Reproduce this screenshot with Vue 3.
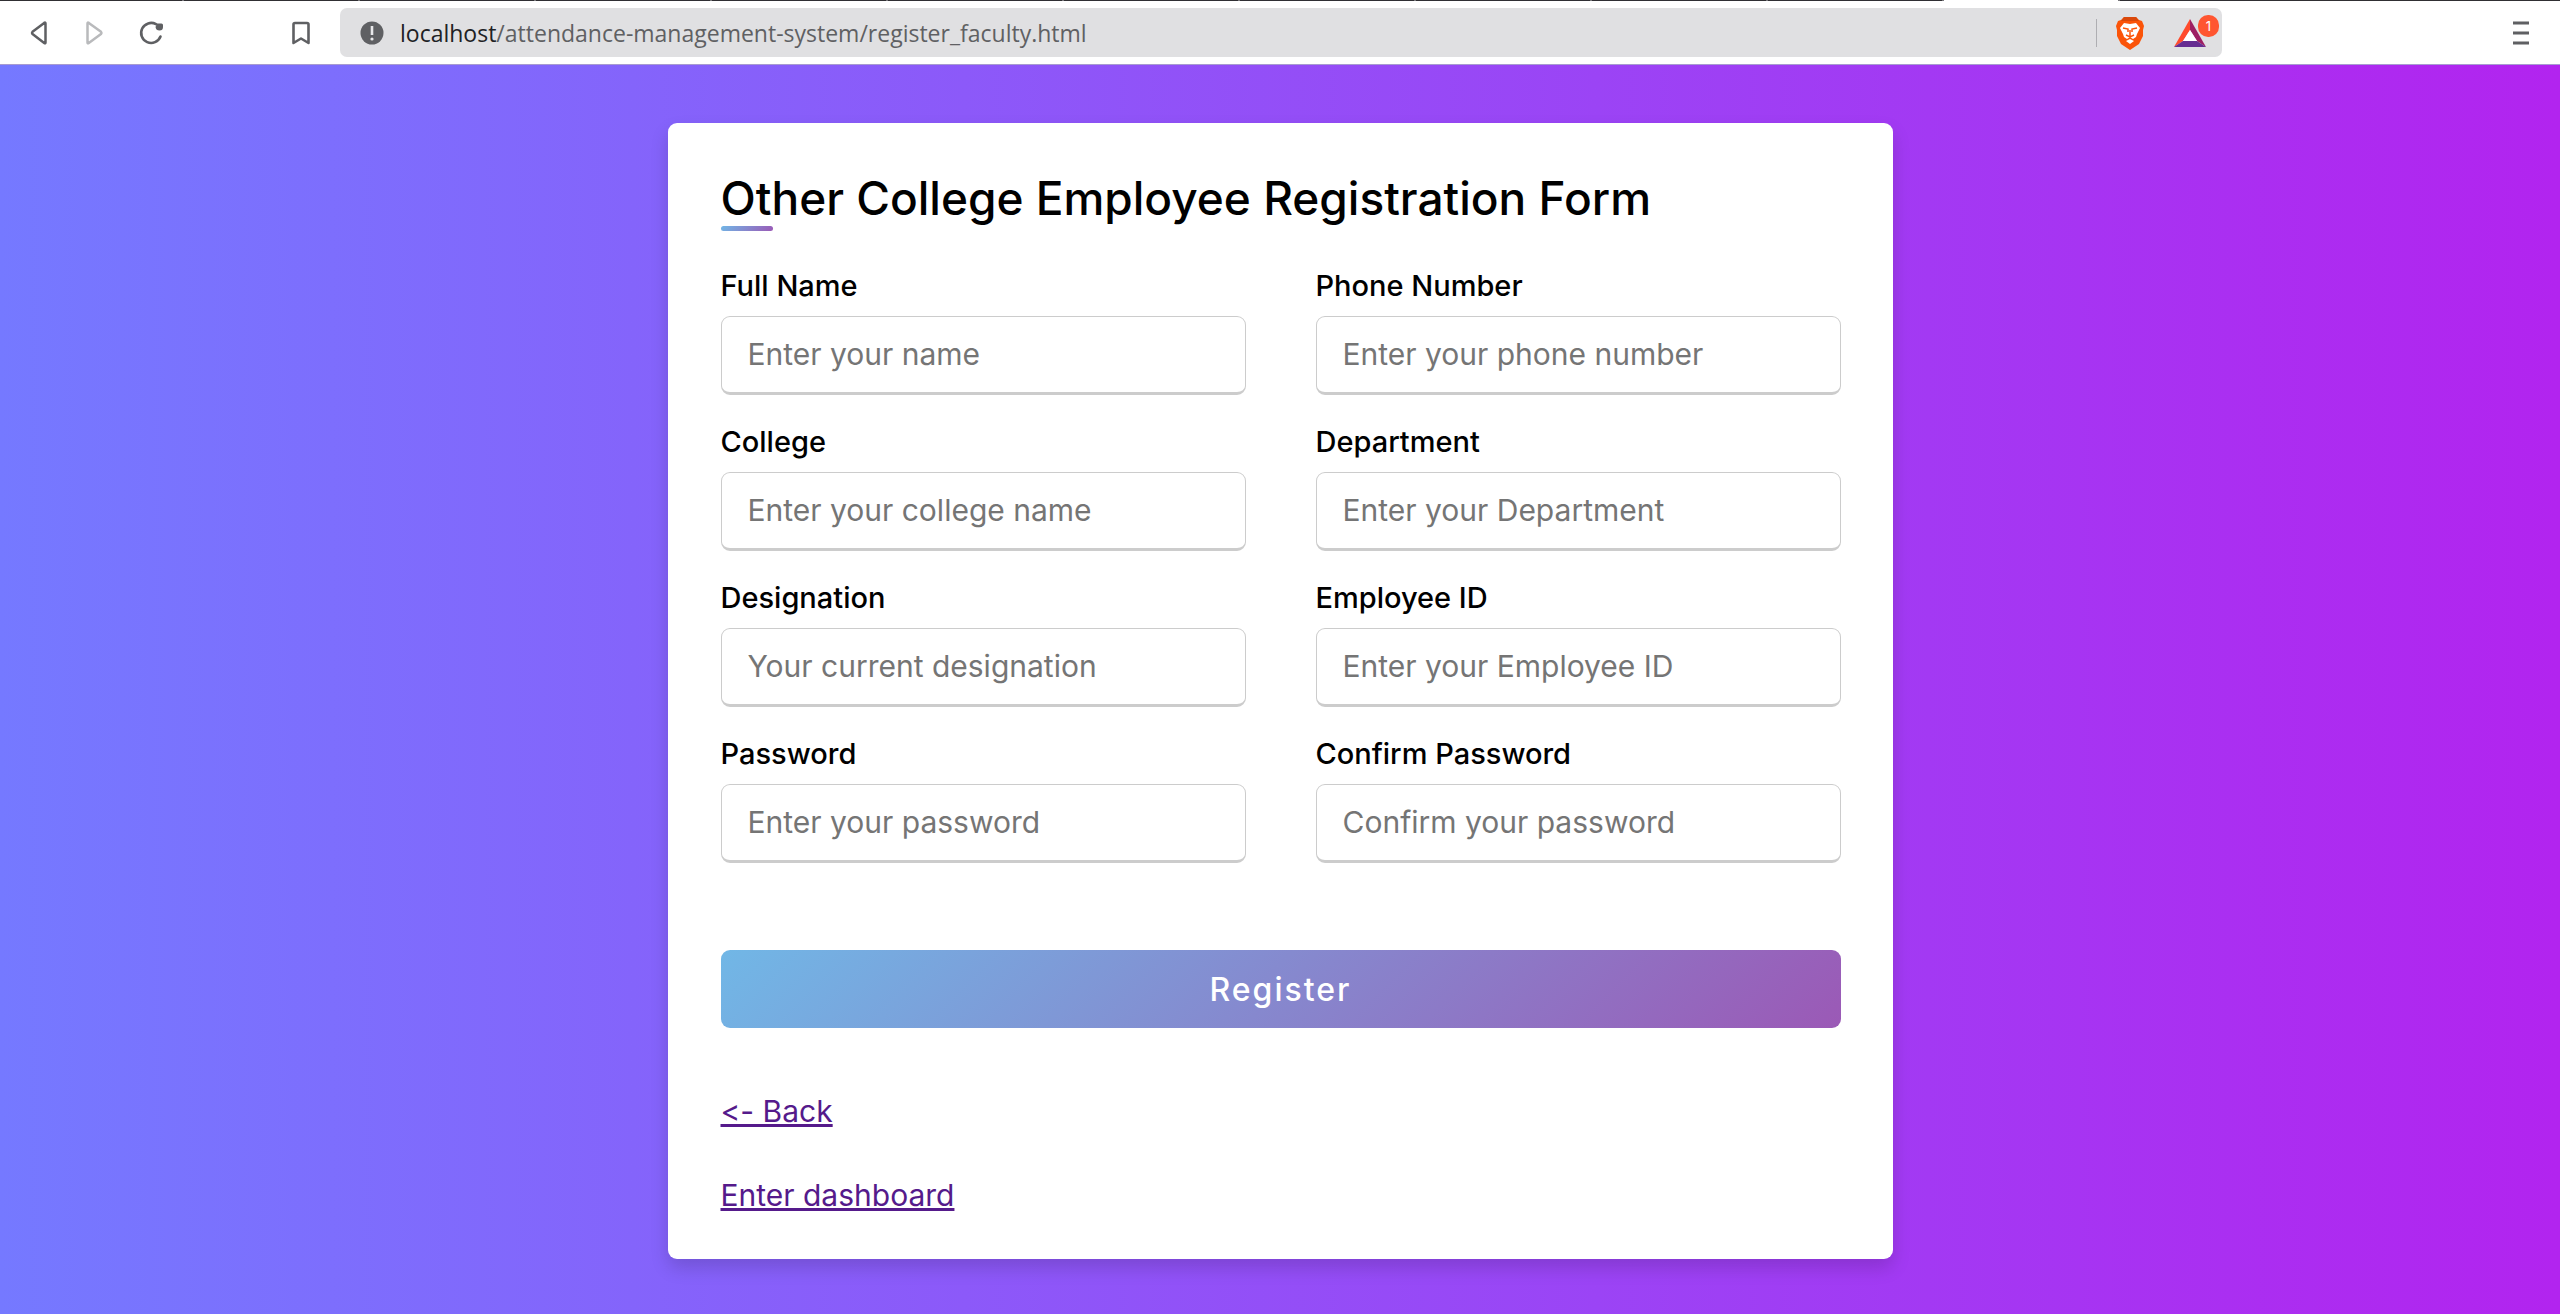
<script setup>
import { reactive } from 'vue'

const fields = [
  { id: 'name', label: 'Full Name', placeholder: 'Enter your name', type: 'text' },
  { id: 'phone', label: 'Phone Number', placeholder: 'Enter your phone number', type: 'text' },
  { id: 'college', label: 'College', placeholder: 'Enter your college name', type: 'text' },
  { id: 'department', label: 'Department', placeholder: 'Enter your Department', type: 'text' },
  { id: 'designation', label: 'Designation', placeholder: 'Your current designation', type: 'text' },
  { id: 'employee-id', label: 'Employee ID', placeholder: 'Enter your Employee ID', type: 'text' },
  { id: 'password', label: 'Password', placeholder: 'Enter your password', type: 'password' },
  { id: 'confirm', label: 'Confirm Password', placeholder: 'Confirm your password', type: 'password' },
]
const form = reactive({})
</script>

<template>
  <div class="window">
    <div class="tab-strip">
      <span v-for="n in 12" :key="n" class="tab" :class="{ active: n === 12 }"></span>
    </div>
    <header class="toolbar">
      <nav class="nav">
        <button type="button" aria-label="Back">
          <svg width="24" height="28" viewBox="0 0 24 28" fill="none" stroke="#5f6063" stroke-width="2.5" stroke-linejoin="round"><path d="M18.500 4.500q0-1.500-1.300-.6L5.500 12.800q-1 1.200 0 2.300L17.200 24q1.300.9 1.300-.6z" /></svg>
        </button>
        <button type="button" aria-label="Forward">
          <svg width="24" height="28" viewBox="0 0 24 28" fill="none" stroke="#b9babc" stroke-width="2.5" stroke-linejoin="round"><path d="M5.500 4.500q0-1.500 1.300-.6l12.200 8.900q1 1.200 0 2.300L6.800 24q-1.300.9-1.300-.6z" /></svg>
        </button>
        <button type="button" aria-label="Reload">
          <svg width="28" height="28" viewBox="0 0 28 28" fill="none" stroke="#5f6063" stroke-width="2.600" stroke-linecap="round"><path d="M19 5.200A10 10 0 1 0 23.500 17.500" /><path d="M20 4.500h4.500a1.500 1.500 0 0 1 1.500 1.500v2q0 3.500-3.500 3.500t-4-3.500z" fill="#5f6063" stroke="none" /></svg>
        </button>
      </nav>
      <button type="button" class="bookmark" aria-label="Bookmark">
        <svg width="20" height="28" viewBox="0 0 20 28" fill="none" stroke="#5f6063" stroke-width="2.600" stroke-linejoin="round"><path d="M2.500 5.500q0-1.500 1.500-1.500h12q1.500 0 1.500 1.500v18.500L10 19.500l-7.500 4.500z" /></svg>
      </button>
      <div class="address">
        <svg class="info" width="24" height="24" viewBox="0 0 24 24"><circle cx="12" cy="12" r="11.500" fill="#5f6063" /><path d="M12 5v9" stroke="#e8e8ea" stroke-width="2.600" /><circle cx="12" cy="18" r="1.600" fill="#e8e8ea" /></svg>
        <p class="url"><span class="host">localhost</span>/attendance-management-system/register_faculty.html</p>
        <span class="divider"></span>
        <svg class="lion" width="30" height="34" viewBox="0 0 30 34">
          <path d="M9 1h12l3 3 3 1 2 5-1 4 0 6-4 8-9 6-9-6-4-8 0-6-1-4 2-5 3-1z" fill="#fb5409" />
          <path d="M9 1h12l3 4H6z" fill="#d9480b" />
          <path d="M9 7l6 1 6-1 4 5-3 6-1 3-3 2-3-2-3 2-3-2-1-3-3-6z" fill="#fff" />
          <path d="M8 12l5 1v3M22 12l-5 1v3M15 14v6M11 19l4 2 4-2" fill="none" stroke="#fb5409" stroke-width="1.500" />
          <path d="M15 23l4 2-4 3-4-3z" fill="#fff" />
        </svg>
        <span class="rewards">
          <svg width="32" height="28" viewBox="0 0 32 28">
            <path d="M16 0L0 28l9-6 7-11z" fill="#ff4a2c" />
            <path d="M16 0l16 28-9-6-7-11z" fill="#9e1f63" />
            <path d="M0 28h32l-9-6H9z" fill="#662d91" />
            <path d="M16 11l7 11H9z" fill="#fff" />
          </svg>
          <span class="count">1</span>
        </span>
      </div>
      <button type="button" class="menu" aria-label="Menu">
        <svg width="16" height="28" viewBox="0 0 16 28" stroke="#5f6063" stroke-width="3"><path d="M0 4h16M0 14h16M0 24h16" /></svg>
      </button>
    </header>

    <main class="page">
      <section class="card">
        <h1>Other College Employee Registration Form</h1>
        <form @submit.prevent>
          <div class="fields">
            <div v-for="f in fields" :key="f.id" class="field">
              <label :for="f.id">{{ f.label }}</label>
              <input :id="f.id" v-model="form[f.id]" :type="f.type" :placeholder="f.placeholder" />
            </div>
          </div>
          <button class="submit" type="submit">Register</button>
        </form>
        <div class="links">
          <a href="#back">&lt;- Back</a>
          <a href="#dashboard">Enter dashboard</a>
        </div>
      </section>
    </main>
  </div>
</template>

<style>
body {
  margin: 0;
}
</style>

<style scoped>
* {
  box-sizing: border-box;
}
.window {
  display: flex;
  flex-direction: column;
  min-height: 100vh;
  font-family: Inter, "Noto Sans", sans-serif;
}
.tab-strip {
  display: flex;
  height: 1px;
  padding-left: 8px;
  background: #302f33;
  overflow: hidden;
}
.tab {
  flex: 0 0 176px;
  border-right: 2px solid #77767a;
}
.tab.active {
  background: #fff;
}
.toolbar {
  display: flex;
  align-items: center;
  height: 64px;
  padding: 0 31px 0 27px;
  background: #fff;
  border-bottom: 1px solid #a79bd0;
}
.toolbar button {
  display: flex;
  padding: 0;
  border: 0;
  background: none;
}
.nav {
  display: flex;
  gap: 31px;
}
.bookmark {
  margin-left: 126px;
}
.address {
  display: flex;
  align-items: center;
  flex: 0 1 1882px;
  height: 49px;
  margin-left: 29px;
  padding: 0 3px 0 20px;
  border-radius: 7px;
  background: #e0e0e2;
}
.url {
  flex: 1;
  margin: 0 0 0 16px;
  font: 23px/32px "Open Sans", "Noto Sans", sans-serif;
  color: #5f6063;
}
.host {
  color: #202124;
}
.divider {
  width: 1px;
  height: 28px;
  background: #aeaeb2;
}
.lion {
  margin-left: 18px;
}
.rewards {
  display: flex;
  position: relative;
  margin-left: 29px;
  padding-right: 13px;
}
.count {
  position: absolute;
  top: -4px;
  right: 0;
  width: 21px;
  height: 22px;
  border-radius: 10px;
  background: #ff5530;
  color: #fff;
  font-size: 13px;
  line-height: 22px;
  text-align: center;
}
.menu {
  margin-left: auto;
}
.page {
  flex: 1;
  display: flex;
  justify-content: center;
  align-items: flex-start;
  padding: 58px 20px 54px;
  background: linear-gradient(to right, #7579ff, #b224ef);
}
.card {
  width: 100%;
  max-width: 1225px;
  padding: 43px 52px 43px 53px;
  border-radius: 9px;
  background: #fff;
  box-shadow: 0 9px 18px rgba(0, 0, 0, 0.15);
}
h1 {
  position: relative;
  margin: 0;
  font-size: 46px;
  font-weight: 500;
  line-height: 65px;
  color: #000;
}
h1::after {
  content: "";
  position: absolute;
  left: 0;
  bottom: 0;
  width: 52px;
  height: 5px;
  border-radius: 3px;
  background: linear-gradient(135deg, #71b7e6, #9b59b6);
}
.fields {
  display: grid;
  grid-template-columns: 1fr 1fr;
  column-gap: 70px;
  row-gap: 26px;
  margin-top: 34px;
}
label {
  display: block;
  margin-bottom: 9px;
  font-size: 29px;
  font-weight: 500;
  line-height: 42px;
}
input {
  display: block;
  width: 100%;
  height: 79px;
  padding: 0 26px 2px;
  border: 1px solid #ccc;
  border-bottom-width: 3px;
  border-radius: 9px;
  outline: none;
  background: #fff;
  font: 30px Inter, "Noto Sans", sans-serif;
}
input::placeholder {
  color: #757575;
}
.submit {
  display: block;
  width: 100%;
  height: 78px;
  margin-top: 87px;
  padding: 0;
  border: 0;
  border-radius: 9px;
  background: linear-gradient(135deg, #71b7e6, #9b59b6);
  color: #fff;
  font: 500 32px Inter, "Noto Sans", sans-serif;
  letter-spacing: 2px;
}
.links {
  display: flex;
  flex-direction: column;
  align-items: flex-start;
  gap: 42px;
  margin-top: 62px;
}
.links a {
  color: #551a8b;
  font-size: 30px;
  line-height: 42px;
  font-feature-settings: "calt" 0;
}
</style>
